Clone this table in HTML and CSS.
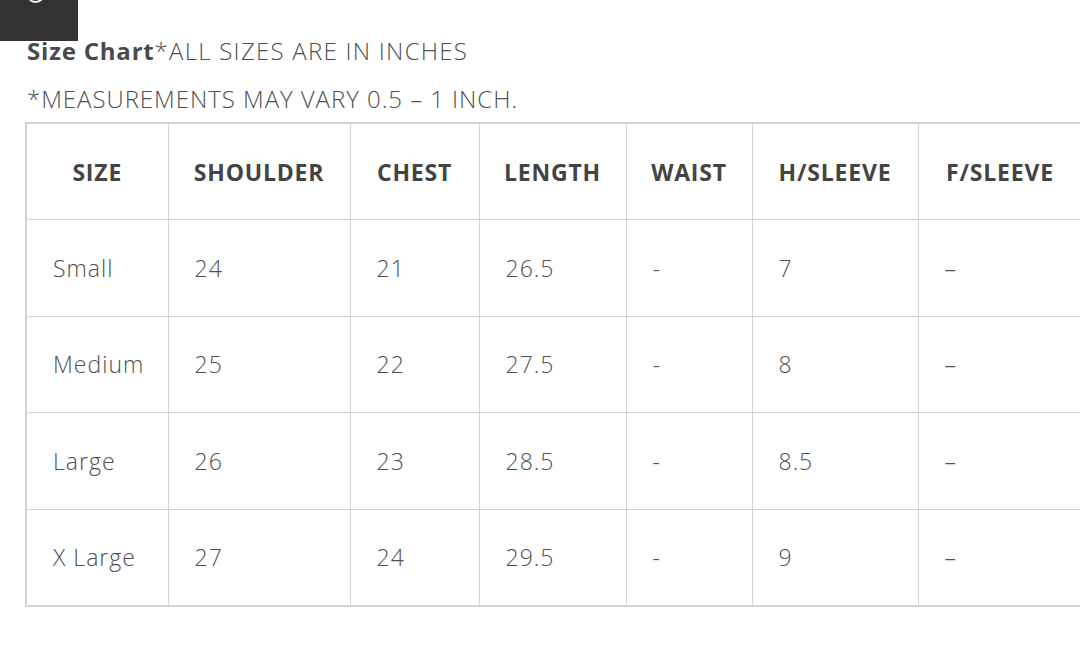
FILE: index.html
```html
<!DOCTYPE html>
<html>
<head>
<meta charset="utf-8">
<link rel="stylesheet" href="styles.css">
</head>
<body>
<div class="topbar">
  <svg class="glyph" width="16" height="6" viewBox="0 0 16 6"><path d="M2 1 C5 3.5 10 3.5 13 1 L13 0" fill="none" stroke="#fff" stroke-width="2"/></svg>
</div>
<div class="content">
  <p class="title"><strong>Size Chart</strong>*ALL SIZES ARE IN INCHES</p>
  <p class="note">*MEASUREMENTS MAY VARY 0.5 – 1 INCH.</p>
  <table class="chart">
    <colgroup>
      <col class="c1"><col class="c2"><col class="c3"><col class="c4"><col class="c5"><col class="c6"><col class="c7">
    </colgroup>
    <thead>
      <tr><th>SIZE</th><th>SHOULDER</th><th>CHEST</th><th>LENGTH</th><th>WAIST</th><th>H/SLEEVE</th><th>F/SLEEVE</th></tr>
    </thead>
    <tbody>
      <tr><td>Small</td><td>24</td><td>21</td><td>26.5</td><td>-</td><td>7</td><td>–</td></tr>
      <tr><td>Medium</td><td>25</td><td>22</td><td>27.5</td><td>-</td><td>8</td><td>–</td></tr>
      <tr><td>Large</td><td>26</td><td>23</td><td>28.5</td><td>-</td><td>8.5</td><td>–</td></tr>
      <tr><td>X Large</td><td>27</td><td>24</td><td>29.5</td><td>-</td><td>9</td><td>–</td></tr>
    </tbody>
  </table>
</div>
</body>
</html>
```

FILE: styles.css
```css
html, body {
  margin: 0;
  padding: 0;
  overflow: hidden;
  background: #fff;
}
body {
  font-family: "Open Sans", "Noto Sans", sans-serif;
  color: #555;
  width: 1080px;
}
.topbar {
  width: 78px;
  height: 41px;
  background: #333;
  position: relative;
}
.glyph {
  position: absolute;
  left: 28px;
  top: -1px;
}
.content {
  padding-left: 27px;
}
.title {
  margin: 0;
  font-size: 24px;
  line-height: 20px;
  letter-spacing: 1.25px;
  font-weight: 300;
  color: #4f4f4f;
}
.title strong {
  font-weight: 700;
  color: #4a4a4a;
  letter-spacing: 0.8px;
}
.note {
  margin: 28px 0 0 0;
  font-size: 24px;
  line-height: 20px;
  letter-spacing: 0.95px;
  font-weight: 300;
  color: #4f4f4f;
}
.chart {
  margin-top: 13px;
  margin-left: -2px;
  border-collapse: collapse;
  table-layout: fixed;
  width: 1056px;
  border: 2px solid #d4d4d4;
  border-right: none;
}
.c1 { width: 142px; }
.c2 { width: 182px; }
.c3 { width: 129px; }
.c4 { width: 147px; }
.c5 { width: 126px; }
.c6 { width: 166px; }
.c7 { width: 164px; }
.chart th, .chart td {
  border: 1px solid #d4d4d4;
  height: 96.5px;
  padding: 0 0 0 26px;
  box-sizing: border-box;
  vertical-align: middle;
  white-space: nowrap;
}
.chart th {
  text-align: center;
  padding: 0;
  font-size: 23px;
  font-weight: 700;
  letter-spacing: 0.8px;
  color: #444;
}
.chart td {
  text-align: left;
  font-size: 23px;
  font-weight: 300;
  letter-spacing: 1px;
  color: #4f4f4f;
}
```
